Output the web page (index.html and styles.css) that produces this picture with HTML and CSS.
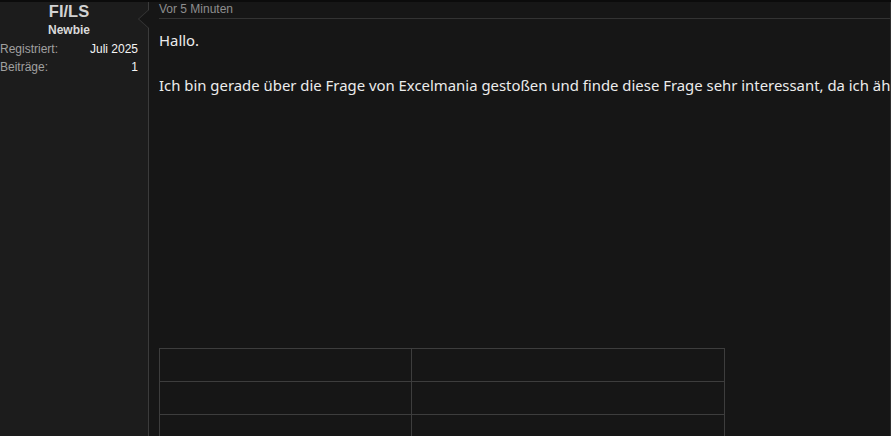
FILE: index.html
```html
<!DOCTYPE html>
<html>
<head>
<meta charset="utf-8">
<link rel="stylesheet" href="styles.css">
</head>
<body>
    <div class="post">
        <div class="userinfo">
            <div class="username">FI/LS</div>
            <div class="usertitle">Newbie</div>
            <dl class="userstats">
                <dt>Registriert:</dt>
                <dd>Juli 2025</dd>
                <dt>Beiträge:</dt>
                <dd>1</dd>
            </dl>
        </div>
        <div class="message">
            <div class="message-date">Vor 5 Minuten</div>
            <div class="message-body">
                <p>Hallo.</p>
                <p>Ich bin gerade über die Frage von Excelmania gestoßen und finde diese Frage sehr interessant, da ich ähnliche Probleme habe.</p>
                <div class="spacer"></div>
                <table class="grid">
                    <tr><td class="col-a"></td><td class="col-b"></td></tr>
                    <tr><td class="col-a"></td><td class="col-b"></td></tr>
                    <tr><td class="col-a"></td><td class="col-b"></td></tr>
                </table>
            </div>
        </div>
    </div>
</body>
</html>
```

FILE: styles.css
```css
body, html {
    margin: 0;
}

body {
    background-color: #1f1f1f;
    height: 436px;
    overflow: hidden;
}

.post {
    display: flex;
    border-top: 2px solid #0b0b0b;
    height: 434px;
}

.userinfo {
    width: 138px;
    padding-right: 10px;
    background-color: #1c1c1c;
    font-family: "Liberation Sans", Arial, sans-serif;
    font-size: 12px;
    color: #a0a0a0;
}

.username {
    text-align: center;
    font-size: 16.5px;
    font-weight: bold;
    color: #d2d2d2;
    line-height: 17px;
    padding-top: 1px;
}

.usertitle {
    text-align: center;
    font-weight: bold;
    color: #dadada;
    line-height: 15px;
    margin-top: 3px;
}

.userstats {
    display: grid;
    grid-template-columns: 1fr auto;
    row-gap: 4px;
    margin: 4px 0 0 0;
    line-height: 14px;
}

.userstats dd {
    margin: 0;
    text-align: right;
    color: #f4f4f4;
}

.message {
    position: relative;
    flex: 1;
    min-width: 0;
    background-color: #161616;
    border-left: 1px solid #3b3b3b;
    border-right: 1px solid #2e2e2e;
    padding-left: 10px;
}

.message::before,
.message::after {
    content: "";
    position: absolute;
    top: 8px;
    border-style: solid;
    border-color: transparent;
}

.message::before {
    left: -11px;
    border-width: 9px 10px 9px 0;
    border-right-color: #3b3b3b;
}

.message::after {
    left: -10px;
    border-width: 9px 10px 9px 0;
    border-right-color: #161616;
}

.message-date {
    font-family: "Liberation Sans", Arial, sans-serif;
    font-size: 12px;
    color: #8e8e8e;
    line-height: 14px;
    padding-bottom: 2px;
    border-bottom: 1px solid #333333;
}

.message-body {
    overflow: hidden;
    font-family: "Noto Sans", "Open Sans", sans-serif;
    font-size: 14.9px;
    color: #ececec;
    line-height: 22px;
    padding-top: 10px;
}

.message-body p {
    margin: 0 0 23px 0;
    white-space: nowrap;
}

.spacer {
    height: 229px;
}

.grid {
    border-collapse: collapse;
}

.grid td {
    border: 1px solid #3d3d3d;
    height: 32px;
    padding: 0;
}

.col-a {
    width: 251px;
}

.col-b {
    width: 312px;
}
```
